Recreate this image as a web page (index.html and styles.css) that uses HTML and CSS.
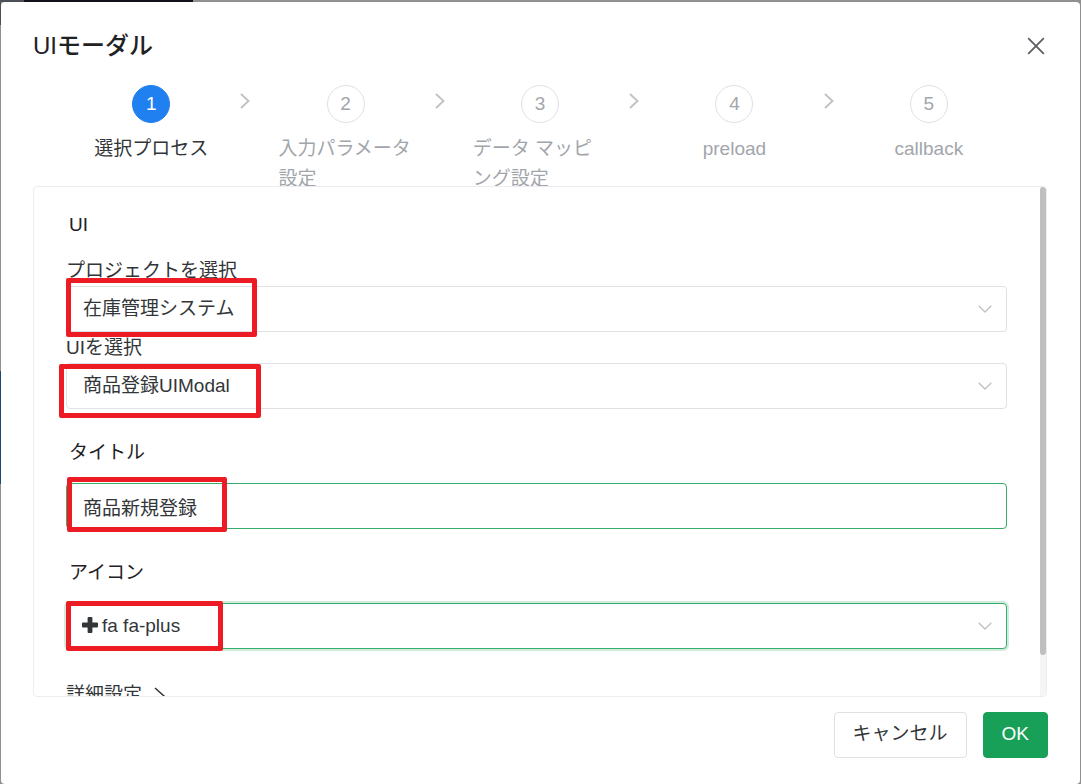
FILE: index.html
```html
<!DOCTYPE html>
<html lang="ja">
<head>
<meta charset="utf-8">
<title>UIモーダル</title>
<link rel="stylesheet" href="styles.css">
</head>
<body>
<div class="modal" role="dialog" aria-labelledby="modal-title">
  <header class="modal-header">
    <h1 class="modal-title" id="modal-title">UIモーダル</h1>
    <button class="close" type="button" aria-label="閉じる">
      <svg width="18" height="18" viewBox="0 0 18 18" fill="none" stroke="#5c5f62" stroke-width="1.8"><path d="M1.2 1.2 16.8 16.8M16.8 1.2 1.2 16.8"/></svg>
    </button>
  </header>

  <ol class="steps">
    <li class="step step-active"><span class="step-number">1</span><span class="step-label">選択プロセス</span></li>
    <li class="step-arrow" aria-hidden="true"><svg width="10" height="16" viewBox="0 0 10 16"><path d="M1 1l7.500 7L1 15"/></svg></li>
    <li class="step"><span class="step-number">2</span><span class="step-label">入力パラメータ設定</span></li>
    <li class="step-arrow" aria-hidden="true"><svg width="10" height="16" viewBox="0 0 10 16"><path d="M1 1l7.500 7L1 15"/></svg></li>
    <li class="step"><span class="step-number">3</span><span class="step-label">データ マッピング設定</span></li>
    <li class="step-arrow" aria-hidden="true"><svg width="10" height="16" viewBox="0 0 10 16"><path d="M1 1l7.500 7L1 15"/></svg></li>
    <li class="step"><span class="step-number">4</span><span class="step-label">preload</span></li>
    <li class="step-arrow" aria-hidden="true"><svg width="10" height="16" viewBox="0 0 10 16"><path d="M1 1l7.500 7L1 15"/></svg></li>
    <li class="step"><span class="step-number">5</span><span class="step-label">callback</span></li>
  </ol>

  <section class="panel">
    <form class="panel-content">
      <h2 class="section-title">UI</h2>

      <label class="label" for="project">プロジェクトを選択</label>
      <div class="field">
        <select class="control" id="project"><option>在庫管理システム</option></select>
        <svg class="chevron" width="14" height="8" viewBox="0 0 14 8"><path d="M.7.8 7 7 13.3.8"/></svg>
        <span class="mark mark-project"></span>
      </div>

      <label class="label" for="ui">UIを選択</label>
      <div class="field">
        <select class="control" id="ui"><option>商品登録UIModal</option></select>
        <svg class="chevron" width="14" height="8" viewBox="0 0 14 8"><path d="M.7.8 7 7 13.3.8"/></svg>
        <span class="mark mark-ui"></span>
      </div>

      <label class="label label-item" for="title">タイトル</label>
      <div class="field">
        <input class="control control-changed" id="title" type="text" value="商品新規登録">
        <span class="mark mark-title"></span>
      </div>

      <label class="label label-item" for="icon">アイコン</label>
      <div class="field">
        <select class="control control-changed control-focus control-icon" id="icon"><option>fa fa-plus</option></select>
        <svg class="plus" width="16" height="16" viewBox="0 0 16 16"><path d="M6.600 0h2.800q1 0 1 1v4.600H15q1 0 1 1v2.800q0 1-1 1h-4.600V15q0 1-1 1H6.600q-1 0-1-1v-4.600H1q-1 0-1-1V6.600q0-1 1-1h4.600V1q0-1 1-1z"/></svg>
        <svg class="chevron" width="14" height="8" viewBox="0 0 14 8"><path d="M.7.8 7 7 13.3.8"/></svg>
        <span class="mark mark-icon"></span>
      </div>

      <button class="details" type="button">詳細設定
        <svg width="12" height="18" viewBox="0 0 12 18"><path d="M1 2l9 8-9 8"/></svg>
      </button>
    </form>
    <div class="scroll-track" aria-hidden="true"><div class="scroll-thumb"></div></div>
  </section>

  <footer class="modal-footer">
    <button class="button" type="button">キャンセル</button>
    <button class="button button-primary" type="button">OK</button>
  </footer>
</div>
</body>
</html>
```
FILE: styles.css
```css
* {
  box-sizing: border-box;
}

body {
  margin: 0;
  height: 100vh;
  padding: 2px 1px 0;
  display: flex;
  overflow: hidden;
  background:
    linear-gradient(90deg, #4d5058 24px, #121018 24px 193px, transparent 193px) top / 100% 2px no-repeat,
    linear-gradient(#4d5058 25px, #909090 25px 371px, #1c4a74 371px 484px, #909090 484px) left / 1px 100% no-repeat,
    #909090;
  color: #333639;
  font: 19px/30px "Liberation Sans", "Noto Sans CJK JP", sans-serif;
}

button,
input,
select {
  font: inherit;
  color: inherit;
}

.modal {
  flex: 1;
  min-width: 0;
  display: flex;
  flex-direction: column;
  padding: 27px 33px 26px 32px;
  background: #fff;
  border-radius: 4px;
}

.modal-header {
  display: flex;
  justify-content: space-between;
  align-items: center;
  height: 34px;
}

.modal-title {
  margin: 0;
  color: #1f2225;
  font-size: 24px;
  font-weight: 500;
  line-height: 34px;
}

.close {
  display: flex;
  padding: 2px;
  border: 0;
  background: none;
}

.steps {
  flex: none;
  display: flex;
  height: 102px;
  margin: 21px 0 0;
  padding: 0 29px;
  list-style: none;
  overflow: hidden;
}

.step {
  flex: 1;
  min-width: 0;
  display: flex;
  flex-direction: column;
  align-items: center;
  padding: 0 22px;
  color: #a2a6ab;
}

.step-number {
  flex: none;
  width: 38px;
  height: 38px;
  margin: 1px 0 11px;
  border: 1px solid #e0e0e6;
  border-radius: 50%;
  line-height: 36px;
  text-align: center;
}

.step-active {
  color: #333639;
}

.step-active .step-number {
  border-color: #2080f0;
  background: #2080f0;
  color: #fff;
}

.step-arrow {
  flex: none;
  width: 16px;
  padding-top: 9px;
}

.step-arrow svg {
  display: block;
  fill: none;
  stroke: #c2c2c4;
  stroke-width: 1.9;
}

.panel {
  flex: 1;
  min-height: 0;
  display: flex;
  border: 1px solid #ededf1;
  border-radius: 4px;
  overflow: hidden;
}

.panel-content {
  flex: 1;
  padding: 23px 33px 0 32px;
}

.section-title {
  margin: 0 0 16px 3px;
  color: #1f2225;
  font-size: 19px;
  font-weight: 400;
}

.label {
  display: block;
  margin-top: 1px;
}

.label-item {
  margin: 29px 0 15px 3px;
  color: #1f2225;
}

.field {
  position: relative;
}

.control {
  display: block;
  width: 100%;
  height: 46px;
  padding: 0 16px;
  border: 1px solid #e0e0e6;
  border-radius: 4px;
  outline: 0;
  background: #fff;
  appearance: none;
}

.control-changed {
  border-color: #36ad6a;
}

.control-focus {
  box-shadow: 0 0 0 2px #d1ebdd;
}

.control-icon {
  padding-left: 35px;
}

.chevron {
  position: absolute;
  top: 19px;
  right: 15px;
  fill: none;
  stroke: #c2c2c2;
  stroke-width: 1.4;
}

.plus {
  position: absolute;
  top: 14px;
  left: 16px;
  fill: #333639;
}

.mark {
  position: absolute;
  border: 5px solid #ed1c24;
  border-radius: 2px;
  pointer-events: none;
}

.mark-project {
  top: -8px;
  left: 0;
  width: 191px;
  height: 59px;
}

.mark-ui {
  top: 1px;
  left: -7px;
  width: 202px;
  height: 54px;
}

.mark-title {
  top: -6px;
  left: 1px;
  width: 160px;
  height: 55px;
}

.mark-icon {
  top: -2px;
  left: 0;
  width: 157px;
  height: 50px;
}

.details {
  display: flex;
  align-items: center;
  gap: 12px;
  margin-top: 31px;
  padding: 0;
  border: 0;
  background: none;
}

.details svg {
  fill: none;
  stroke: #333639;
  stroke-width: 1.5;
}

.scroll-track {
  flex: none;
  width: 6px;
  background: #f5f5f5;
}

.scroll-thumb {
  height: 92%;
  border-radius: 3px;
  background: #bfbfbf;
}

.modal-footer {
  display: flex;
  justify-content: flex-end;
  gap: 16px;
  margin: 15px -1px 0 0;
}

.button {
  height: 46px;
  padding: 0 18px 3px;
  border: 1px solid #e0e0e6;
  border-radius: 4px;
  background: #fff;
}

.button-primary {
  border-color: #18a058;
  background: #18a058;
  color: #fff;
  font-weight: 500;
}
```
